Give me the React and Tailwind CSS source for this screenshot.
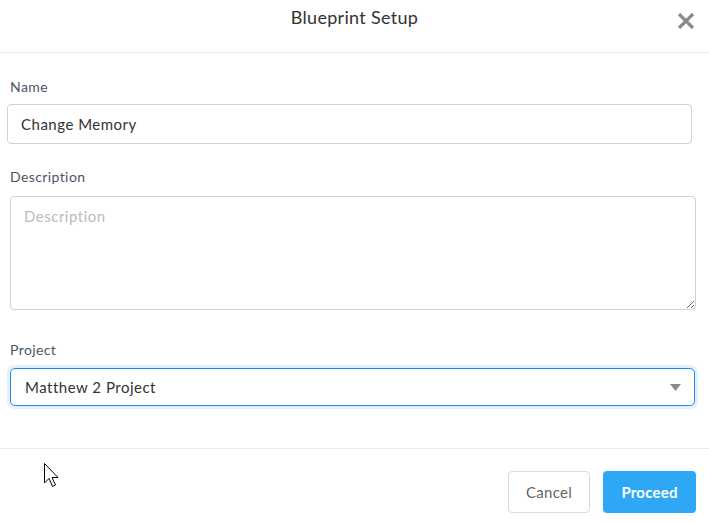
import React from "react";

export default function App() {
  return (
    <div className="relative w-[709px] h-[523px] bg-white font-['Lato',sans-serif] overflow-hidden">
      <div className="relative h-[53px] border-b border-[#ececec] flex justify-center">
        <div className="pt-[5px] text-[18px] leading-[24px] tracking-[0.3px] text-[#333]">Blueprint Setup</div>
        <button className="absolute right-[14px] top-[13px]">
          <svg width="18" height="16" viewBox="0 0 18 16">
            <path d="M2 1 L16 15 M16 1 L2 15" stroke="#8a8a8a" strokeWidth="3.2" strokeLinecap="butt" />
          </svg>
        </button>
      </div>

      <div className="flex flex-col pt-[24px]">
        <label className="ml-[10px] text-[14px] leading-[20px] tracking-[0.4px] text-[#4b5563]">Name</label>
        <input
          readOnly
          value="Change Memory"
          className="mt-[7px] ml-[7px] w-[685px] h-[40px] border border-[#cfd2d6] rounded-[4px] pl-[13px] text-[15px] tracking-[0.5px] text-[#333] outline-none"
        />

        <label className="mt-[23px] ml-[10px] text-[14px] leading-[20px] tracking-[0.4px] text-[#4b5563]">Description</label>
        <textarea
          placeholder="Description"
          className="mt-[9px] ml-[10px] w-[686px] h-[114px] border border-[#cfd2d6] rounded-[4px] pl-[13px] pt-[9px] text-[15px] leading-[20px] tracking-[0.5px] text-[#333] placeholder:text-[#b8bcc0] outline-none"
        />

        <label className="mt-[30px] ml-[10px] text-[14px] leading-[20px] tracking-[0.4px] text-[#4b5563]">Project</label>
        <div className="mt-[8px] ml-[10px] w-[685px] h-[38px] border border-[#1e88f0] rounded-[5px] shadow-[0_0_0_3px_#e3f0fd] flex items-center justify-between pl-[14px] pr-[13px]">
          <span className="text-[15px] tracking-[0.5px] text-[#333]">Matthew 2 Project</span>
          <svg width="11" height="7" viewBox="0 0 11 7">
            <path d="M0 0 H11 L5.5 7 Z" fill="#8a8a8a" />
          </svg>
        </div>
      </div>

      <div className="absolute left-0 right-0 top-[448px] border-t border-[#ececec] flex justify-end gap-[13px] pt-[22px] pr-[13px]">
        <button className="w-[82px] h-[42px] border border-[#d9dcdf] rounded-[4px] text-[15px] tracking-[0.3px] text-[#666] bg-white">Cancel</button>
        <button className="w-[93px] h-[42px] rounded-[4px] text-[15px] font-bold tracking-[0.2px] text-white bg-[#2ea8f5]">Proceed</button>
      </div>

      <svg className="absolute left-[44px] top-[463px]" width="20" height="28" viewBox="0 0 20 28">
        <path d="M0.5 0.5 L0.5 20 L5 15.5 L8.5 23.5 L11.5 22 L8 14.5 L14 14.5 Z" fill="#fff" stroke="#000" strokeWidth="1" strokeLinejoin="miter" />
      </svg>
    </div>
  );
}
